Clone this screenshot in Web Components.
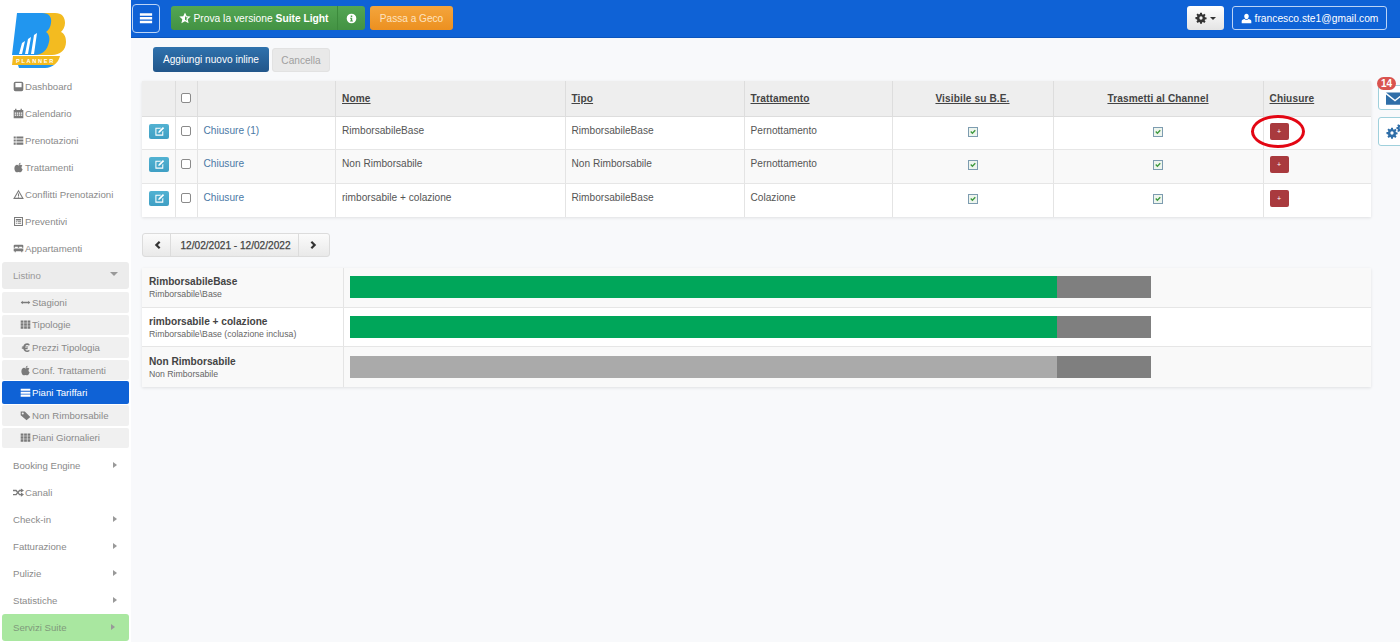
<!DOCTYPE html>
<html lang="it">
<head>
<meta charset="utf-8">
<title>BB Planner - Piani Tariffari</title>
<style>
  html, body { margin: 0; height: 100%; overflow: hidden; background: #f8f9fb; }
  body { font-family: "Liberation Sans", Arial, sans-serif; font-size: 10.5px; color: #555; }
</style>
</head>
<body>
<bb-app>
  <bb-sidebar slot="side">
    <bb-nav-item icon="hdd">Dashboard</bb-nav-item>
    <bb-nav-item icon="calendar">Calendario</bb-nav-item>
    <bb-nav-item icon="list">Prenotazioni</bb-nav-item>
    <bb-nav-item icon="apple">Trattamenti</bb-nav-item>
    <bb-nav-item icon="warning">Conflitti Prenotazioni</bb-nav-item>
    <bb-nav-item icon="listalt">Preventivi</bb-nav-item>
    <bb-nav-item icon="bed">Appartamenti</bb-nav-item>
    <bb-nav-item variant="open" caret="down">Listino</bb-nav-item>
    <bb-sub-nav>
      <bb-nav-item variant="sub" icon="resize">Stagioni</bb-nav-item>
      <bb-nav-item variant="sub" icon="th">Tipologie</bb-nav-item>
      <bb-nav-item variant="sub" icon="euro">Prezzi Tipologia</bb-nav-item>
      <bb-nav-item variant="sub" icon="apple">Conf. Trattamenti</bb-nav-item>
      <bb-nav-item variant="sub active" icon="menu">Piani Tariffari</bb-nav-item>
      <bb-nav-item variant="sub" icon="tag">Non Rimborsabile</bb-nav-item>
      <bb-nav-item variant="sub" icon="th">Piani Giornalieri</bb-nav-item>
    </bb-sub-nav>
    <bb-nav-item caret="right">Booking Engine</bb-nav-item>
    <bb-nav-item icon="random">Canali</bb-nav-item>
    <bb-nav-item caret="right">Check-in</bb-nav-item>
    <bb-nav-item caret="right">Fatturazione</bb-nav-item>
    <bb-nav-item caret="right">Pulizie</bb-nav-item>
    <bb-nav-item caret="right">Statistiche</bb-nav-item>
    <bb-nav-item variant="suite" caret="right">Servizi Suite</bb-nav-item>
  </bb-sidebar>
  <bb-topbar slot="top"></bb-topbar>
  <bb-toolbar></bb-toolbar>
  <bb-rates-table></bb-rates-table>
  <bb-date-nav>12/02/2021 - 12/02/2022</bb-date-nav>
  <bb-timeline></bb-timeline>
  <bb-side-tools slot="over"></bb-side-tools>
</bb-app>

<script>
const ICONS = {
  hdd: '<path fill-rule="evenodd" d="M3.500 1h9A2.500 2.500 0 0 1 15 3.500v9a2.500 2.500 0 0 1-2.500 2.500h-9A2.500 2.500 0 0 1 1 12.500v-9A2.500 2.500 0 0 1 3.500 1zM3.500 3v6h9V3z"/>',
  calendar: '<path d="M3 1h2v2h6V1h2v2h2v12H1V3h2zM2.500 6.500v1.700h2v-1.700zm3 0v1.700h2v-1.700zm3 0v1.700h2v-1.700zm3 0v1.700h2v-1.700zm-9 3v1.700h2v-1.700zm3 0v1.700h2v-1.700zm3 0v1.700h2v-1.700zm3 0v1.700h2v-1.700z" fill-rule="evenodd"/>',
  list: '<path d="M1 2h3v3H1zm4 0h10v3H5zM1 6.500h3v3H1zm4 0h10v3H5zM1 11h3v3H1zm4 0h10v3H5z"/>',
  apple: '<path d="M8.200 4.300C8.300 2.600 9.300 1.300 11 1c.1 1.700-1 3-2.800 3.300zM8 5c1-.6 2-.9 3-.9 1.100 0 2 .5 2.700 1.400-2 1.300-1.800 4 .3 5-.6 1.900-1.800 4.500-3.300 4.500-.9 0-1.500-.6-2.700-.6s-1.800.6-2.700.6C3.500 15 2 11.800 2 9.300 2 6 4 4.100 5.800 4.100 6.700 4.100 7.400 4.700 8 5z"/>',
  warning: '<path fill-rule="evenodd" d="M8 1l7.800 13.500H.2zM8 4L3 12.900h10zM7.200 6.500h1.600v3.700H7.200zm0 4.400h1.600v1.300H7.200z"/>',
  listalt: '<path fill-rule="evenodd" d="M1.500 1.500h13v13h-13zM3 3v10h10V3zm1.200 1.500h7.600v2H4.200zm0 3h1.500v1.300H4.200zm2.500 0h5.100v1.300H6.700zm-2.500 2.300h1.500v1.300H4.200zm2.500 0h5.100v1.300H6.700z"/>',
  bed: '<path d="M2.500 2.500h11A1.500 1.500 0 0 1 15 4v3h-2V5.500H9V7H7V5.500H3V7H1V4a1.500 1.500 0 0 1 1.500-1.500zM1 8h14v4h-1.500v1.500H12V12H4v1.500H2.500V12H1z"/>',
  resize: '<path d="M1 8l3-2.500V7h8V5.500L15 8l-3 2.500V9H4v1.500z"/>',
  th: '<path d="M1 2h4v3.400H1zm5 0h4v3.400H6zm5 0h4v3.400h-4zM1 6.300h4v3.400H1zm5 0h4v3.400H6zm5 0h4v3.400h-4zM1 10.600h4V14H1zm5 0h4V14H6zm5 0h4V14h-4z"/>',
  euro: '<path d="M14 3.200l-.6 2.200C12.600 4.800 11.600 4.400 10.600 4.400c-1.500 0-2.500.9-3 2.100H12l-.4 1.500H7.300v.9h4l-.4 1.500H7.700c.5 1.100 1.500 1.800 3 1.800 1.100 0 2.100-.4 3-1.100v2.500c-1 .6-2.100.9-3.300.9-2.900 0-5-1.700-5.700-4.600H2.500l.4-1.500h1.600V8H2.500l.4-1.500h1.800C5.500 3.400 7.700 1.800 10.500 1.800c1.300 0 2.500.5 3.500 1.400z"/>',
  menu: '<path d="M1 2.500h14v3H1zm0 4.300h14v3H1zm0 4.200h14v3H1z"/>',
  tag: '<path fill-rule="evenodd" d="M1 2h6l8 8-5.500 5L1 7.500zM4 3.500a1.500 1.500 0 1 0 0 3 1.500 1.500 0 0 0 0-3z"/>',
  random: '<path d="M11.500 2L16 5l-4.500 3V6H10L8.300 8 10 10h1.500V8l4.500 3-4.500 3v-2H9L7 9.500 5 12H0v-2h4l1.700-2L4 6H0V4h5l2 2.500L9 4h2.500z"/>',
  star: '<path fill-rule="evenodd" d="M8 .5l2.300 5 5.300.5-4 3.600 1.200 5.300L8 12.200l-4.800 2.700 1.200-5.300-4-3.600 5.300-.5zM8 4.500v5.900l2.400 1.400-.6-2.800 2.100-1.800-2.800-.3z"/>',
  info: '<path fill-rule="evenodd" d="M8 1a7 7 0 1 1 0 14A7 7 0 0 1 8 1zM6.900 3.500v2.200h2.200V3.500zM6 7v1.300h1V11H6v1.300h4V11H9V7z"/>',
  cog: '<path fill-rule="evenodd" d="M6.800 1h2.400l.3 2.100 1.200.5 1.700-1.300 1.700 1.700-1.300 1.700.5 1.200 2.100.3v2.400l-2.100.3-.5 1.200 1.300 1.700-1.700 1.700-1.700-1.300-1.200.5-.3 2.100H6.800l-.3-2.100-1.200-.5-1.700 1.300-1.700-1.700 1.300-1.700-.5-1.200L.6 9.200V6.800l2.100-.3.5-1.200-1.300-1.700 1.700-1.700 1.700 1.300 1.200-.5zM8 5.800a2.200 2.200 0 1 0 0 4.400 2.200 2.200 0 0 0 0-4.400z"/>',
  user: '<path d="M8 1c2 0 3.300 1.500 3.300 3.700S10 9 8 9 4.700 6.900 4.700 4.700 6 1 8 1zM5.300 8.600C6 9.500 7 10 8 10s2-.5 2.700-1.400c2.200.6 4.300 1.400 4.300 2.900V15H1v-3.500c0-1.500 2.100-2.300 4.300-2.900z"/>',
  edit: '<path fill-rule="evenodd" d="M2 2.500h8.500L9 4H3.500v8.500H12V8.500L13.500 7v7H2zM13 1.500l1.800 1.800-6.300 6.200-2.300.6.600-2.400z"/>',
  envelope: '<path d="M0 3h16L8 9.500zM0 4.800l8 6.400 8-6.400V14H0z"/>',
  check: '<path d="M2.500 8l2-2 2.300 2.300 4.700-5 2 2L6.800 12.500z"/>',
  left: '<path d="M11 1.500L13.500 4l-4 4 4 4-2.500 2.500L4.500 8z"/>',
  right: '<path d="M5 1.500L2.500 4l4 4-4 4L5 14.500 11.500 8z"/>'
};

class BbIcon extends HTMLElement {
  constructor() {
    super();
    this.attachShadow({ mode: 'open' });
  }

  connectedCallback() {
    const size = this.getAttribute('size') || 11;
    this.shadowRoot.innerHTML = `
      <style>
        :host { display: inline-flex; flex: none; width: ${size}px; height: ${size}px; }
        svg { width: 100%; height: 100%; fill: currentColor; display: block; }
      </style>
      <svg viewBox="0 0 16 16" aria-hidden="true">${ICONS[this.getAttribute('name')] || ''}</svg>
    `;
  }
}
customElements.define('bb-icon', BbIcon);

class BbApp extends HTMLElement {
  constructor() {
    super();
    this.attachShadow({ mode: 'open' });
    this.shadowRoot.innerHTML = `
      <style>
        :host { display: flex; height: 642px; width: 1400px; position: relative; overflow: hidden; }
        .main { flex: 1; min-width: 0; display: flex; flex-direction: column; }
        .content { padding: 9px 29px 0 11px; display: flex; flex-direction: column; }
      </style>
      <slot name="side"></slot>
      <div class="main">
        <slot name="top"></slot>
        <div class="content"><slot></slot></div>
      </div>
      <slot name="over"></slot>
    `;
  }
}
customElements.define('bb-app', BbApp);

class BbSidebar extends HTMLElement {
  constructor() {
    super();
    this.attachShadow({ mode: 'open' });
    this.shadowRoot.innerHTML = `
      <style>
        :host { display: block; width: 131px; flex: none; background: #fff; }
        .logo { height: 73px; padding: 13px 0 0 12px; box-sizing: border-box; }
        svg { display: block; width: 55px; height: 56px; }
        text { font: bold 5.600px "Liberation Sans", Arial, sans-serif; letter-spacing: 1.700px; fill: #fff; }
      </style>
      <div class="logo">
        <svg viewBox="0 0 55 56">
          <path fill="#f3bb20" d="M28 0h15c7 0 10 4 10 10 0 4-2 7-4 9 4 2 5 6 5 10 0 8-6 13-14 13H24z"/>
          <path fill="#2196ef" d="M5 0h25c7 0 10 4 9 10-.5 4-2 7-5 9 3 2 4 6 3 10-1.500 8-7 13-14 13H0z"/>
          <path fill="#fff" d="M7 41l3-11 3-2-3 13zM13 41l3-15 3-2-3 17zM19 41l3-19 3-2-3 21z"/>
          <path fill="#f3bb20" d="M1 43h47c-1 4-3 7-6 9H0z"/>
          <path fill="#2196ef" d="M6 52h36c-2 1-5 3-9 3H7z"/>
          <text x="4" y="50">PLANNER</text>
        </svg>
      </div>
      <slot></slot>
    `;
  }
}
customElements.define('bb-sidebar', BbSidebar);

class BbSubNav extends HTMLElement {
  constructor() {
    super();
    this.attachShadow({ mode: 'open' });
    this.shadowRoot.innerHTML = `
      <style>
        :host { display: grid; grid-auto-rows: 20.600px; row-gap: 2px; padding: 3px 0 4px; }
      </style>
      <slot></slot>
    `;
  }
}
customElements.define('bb-sub-nav', BbSubNav);

class BbNavItem extends HTMLElement {
  constructor() {
    super();
    this.attachShadow({ mode: 'open' });
  }

  connectedCallback() {
    const icon = this.getAttribute('icon');
    const caret = this.getAttribute('caret');
    const tri = caret === 'down'
      ? 'border-left:4.500px solid transparent;border-right:4.500px solid transparent;border-top:4px solid #999;margin-top:-4px;'
      : 'border-top:3.500px solid transparent;border-bottom:3.500px solid transparent;border-left:4px solid #999;margin-top:-2px;';
    this.shadowRoot.innerHTML = `
      <style>
        :host { display: flex; align-items: center; gap: 1px; height: 27px; box-sizing: border-box;
          padding: 0 13px; color: #8a8a8a; font-size: 9.650px; white-space: nowrap; }
        :host([variant~="open"]) { background: #ececec; margin: 0 2px; padding: 0 11px; border-radius: 3px; color: #999; }
        :host([variant~="sub"]) { height: auto; background: #f0f0f0; margin: 0 2px; padding: 0 0 0 18px; border-radius: 2px; }
        :host([variant~="active"]) { background: #0f62d6; color: #fff; margin-top: -1px; margin-bottom: -1px; }
        :host([variant~="suite"]) { background: #a9e7a0; margin: 0 2px; padding: 0 13px 0 11px; border-radius: 3px; color: #7f9a7b; }
        .caret { margin-left: auto; width: 0; height: 0; ${tri} }
        :host([caret="right"]) .caret { margin-right: 1px; }
        bb-icon { color: #7a7a7a; }
        :host([variant~="active"]) bb-icon { color: #fff; }
      </style>
      ${icon ? `<bb-icon name="${icon}" size="11"></bb-icon>` : ''}
      <span><slot></slot></span>
      ${caret ? '<i class="caret"></i>' : ''}
    `;
  }
}
customElements.define('bb-nav-item', BbNavItem);

class BbButton extends HTMLElement {
  constructor() {
    super();
    this.attachShadow({ mode: 'open' });
    this.shadowRoot.innerHTML = `
      <style>
        :host { display: inline-flex; align-items: center; justify-content: center; gap: 3px; box-sizing: border-box;
          height: 24px; padding: 0 9px; border-radius: 3px; font-size: 10.100px; white-space: nowrap; }
        :host([kind="success"]) { background: linear-gradient(#53a653, #439243); color: #fff; }
        :host([kind="warning"]) { background: linear-gradient(#f4a53c, #ec9020); color: #fde3c0; }
        :host([kind="primary"]) { background: linear-gradient(#2f72ad, #22568a); color: #fff; height: 25px; }
        :host([kind="disabled"]) { background: #e9e9e9; color: #a0a0a0; border: 1px solid #e2e2e2; }
        :host([kind="light"]) { background: linear-gradient(#fff, #e4e4e4); color: #333; }
        :host([kind="outline"]) { background: #0f62d6; border: 1px solid #bcd4f6; color: #fff; }
      </style>
      <slot></slot>
    `;
  }
}
customElements.define('bb-button', BbButton);

class BbTopbar extends HTMLElement {
  constructor() {
    super();
    this.attachShadow({ mode: 'open' });
    this.shadowRoot.innerHTML = `
      <style>
        :host { display: flex; align-items: center; flex: none; height: 38px; box-sizing: border-box;
          background: #0f62d6; border-bottom: 1px solid #0b55bd; padding: 0 13px 1px 1px; }
        .burger { width: 28px; height: 29px; box-sizing: border-box; border: 1px solid #bcd4f6; border-radius: 4px;
          color: #fff; display: flex; align-items: center; justify-content: center; margin-right: 11px; }
        .split { display: flex; margin-right: 5px; }
        #suite { width: 166px; padding: 0 1px 0 0; border-radius: 3px 0 0 3px; font-size: 10.250px; }
        #info { width: 28px; padding: 0; border-radius: 0 3px 3px 0; border-left: 1px solid #3c8a3c; }
        #geco { width: 83px; padding: 0; }
        .spacer { flex: 1; }
        #gear { width: 37px; padding: 0; margin-right: 8px; }
        #user { width: 155px; padding: 0; font-size: 10.250px; }
        .mini { width: 0; height: 0; border-left: 3px solid transparent; border-right: 3px solid transparent; border-top: 3.500px solid #333; }
      </style>
      <div class="burger"><bb-icon name="menu" size="14"></bb-icon></div>
      <div class="split">
        <bb-button id="suite" kind="success"><bb-icon name="star" size="12"></bb-icon><span>Prova la versione <b>Suite Light</b></span></bb-button>
        <bb-button id="info" kind="success"><bb-icon name="info" size="11"></bb-icon></bb-button>
      </div>
      <bb-button id="geco" kind="warning">Passa a Geco</bb-button>
      <div class="spacer"></div>
      <bb-button id="gear" kind="light"><bb-icon name="cog" size="12"></bb-icon><i class="mini"></i></bb-button>
      <bb-button id="user" kind="outline"><bb-icon name="user" size="11"></bb-icon>francesco.ste1@gmail.com</bb-button>
    `;
  }
}
customElements.define('bb-topbar', BbTopbar);

class BbToolbar extends HTMLElement {
  constructor() {
    super();
    this.attachShadow({ mode: 'open' });
    this.shadowRoot.innerHTML = `
      <style>
        :host { display: flex; align-items: flex-end; gap: 3px; padding-left: 11px; margin-bottom: 9px; }
        #add { width: 116px; padding: 0; }
        #del { width: 58px; padding: 0; }
      </style>
      <bb-button id="add" kind="primary">Aggiungi nuovo inline</bb-button>
      <bb-button id="del" kind="disabled">Cancella</bb-button>
    `;
  }
}
customElements.define('bb-toolbar', BbToolbar);

class BbRatesTable extends HTMLElement {
  constructor() {
    super();
    this.attachShadow({ mode: 'open' });
  }

  connectedCallback() {
    const rows = [
      { link: 'Chiusure (1)', nome: 'RimborsabileBase', tipo: 'RimborsabileBase', tratt: 'Pernottamento' },
      { link: 'Chiusure', nome: 'Non Rimborsabile', tipo: 'Non Rimborsabile', tratt: 'Pernottamento' },
      { link: 'Chiusure', nome: 'rimborsabile + colazione', tipo: 'RimborsabileBase', tratt: 'Colazione' }
    ];
    const tick = '<span class="tick"><bb-icon name="check" size="8"></bb-icon></span>';
    this.shadowRoot.innerHTML = `
      <style>
        :host { display: block; margin-bottom: 16px; box-shadow: 0 1px 3px rgba(0,0,0,.1); background: #fff; }
        table { border-collapse: collapse; table-layout: fixed; width: 1229px; font-size: 10.150px; color: #555; }
        th { height: 35px; padding: 0 6px; background: #eee; color: #444; font-size: 10.100px; letter-spacing: .12px; text-align: left;
          text-decoration: underline; border-left: 1px solid #ddd; border-bottom: 1px solid #ddd; box-sizing: border-box; }
        td { padding: 7px 6px 0; line-height: 14px; vertical-align: top; border-left: 1px solid #e4e4e4; border-bottom: 1px solid #e6e6e6; box-sizing: border-box; height: 33.700px; }
        tr:last-child td { border-bottom: 0; }
        th:first-child, td:first-child { border-left: 0; }
        td:nth-child(4), th:nth-child(4) { padding-left: 6.500px; }
        td:first-child { padding-left: 7px; }
        tbody tr:nth-child(even) td { background: #f9f9f9; }
        .c { text-align: center; }
        a { color: #4a78a5; text-decoration: none; }
        .box { display: block; box-sizing: border-box; width: 10px; height: 10px; border: 1px solid #8a8a8a; border-radius: 2px; background: #fff; }
        td .box { margin-top: 2px; }
        .tick { display: inline-flex; box-sizing: border-box; margin-top: 3px; width: 10px; height: 10px; border: 1px solid #7d9cb0; background: #eef5ee; color: #3f9a3f; }
        .edit { display: flex; align-items: center; justify-content: center; width: 20px; height: 15px; margin-top: 0; border-radius: 2px;
          background: linear-gradient(#52b2d2, #3f9fc4); color: #fff; }
        .plus { display: flex; align-items: center; justify-content: center; width: 19px; height: 17px; border-radius: 2px; margin-top: -1px;
          background: #a93a3e; color: #fff; font-size: 7px; line-height: 1; }
        .cb { padding: 0 0 0 5px; }
        td.cb { padding-top: 7px; }
      </style>
      <table>
        <colgroup>
          <col style="width:33px"><col style="width:22px"><col style="width:138px"><col style="width:230px">
          <col style="width:179px"><col style="width:148px"><col style="width:161px"><col style="width:210px"><col style="width:108px">
        </colgroup>
        <thead>
          <tr>
            <th></th>
            <th class="cb"><span class="box"></span></th>
            <th></th>
            <th>Nome</th>
            <th>Tipo</th>
            <th>Trattamento</th>
            <th class="c">Visibile su B.E.</th>
            <th class="c">Trasmetti al Channel</th>
            <th>Chiusure</th>
          </tr>
        </thead>
        <tbody>
          ${rows.map(r => `
            <tr>
              <td><span class="edit"><bb-icon name="edit" size="11"></bb-icon></span></td>
              <td class="cb"><span class="box"></span></td>
              <td><a href="#">${r.link}</a></td>
              <td>${r.nome}</td>
              <td>${r.tipo}</td>
              <td>${r.tratt}</td>
              <td class="c">${tick}</td>
              <td class="c">${tick}</td>
              <td><span class="plus">+</span></td>
            </tr>
          `).join('')}
        </tbody>
      </table>
    `;
  }
}
customElements.define('bb-rates-table', BbRatesTable);

class BbDateNav extends HTMLElement {
  constructor() {
    super();
    this.attachShadow({ mode: 'open' });
    this.shadowRoot.innerHTML = `
      <style>
        :host { display: inline-flex; align-self: flex-start; height: 24px; margin-bottom: 11px; border: 1px solid #dcdcdc; border-radius: 3px;
          box-sizing: border-box; width: 188px; background: linear-gradient(#fbfbfb, #e9e9e9); color: #333; font-size: 10.100px; }
        div { display: flex; align-items: center; justify-content: center; }
        .arrow { width: 27px; flex: none; }
        .arrow + .label + .arrow { width: 30px; }
        .label { flex: 1; padding-left: 2px; color: #444; white-space: nowrap; border-left: 1px solid #dcdcdc; border-right: 1px solid #dcdcdc; -webkit-text-stroke: .25px #444; }
      </style>
      <div class="arrow"><bb-icon name="left" size="10"></bb-icon></div>
      <div class="label"><slot></slot></div>
      <div class="arrow"><bb-icon name="right" size="10"></bb-icon></div>
    `;
  }
}
customElements.define('bb-date-nav', BbDateNav);

class BbTimeline extends HTMLElement {
  constructor() {
    super();
    this.attachShadow({ mode: 'open' });
  }

  connectedCallback() {
    const rows = [
      { title: 'RimborsabileBase', sub: 'Rimborsabile\\Base', color: '#00a65a' },
      { title: 'rimborsabile + colazione', sub: 'Rimborsabile\\Base (colazione inclusa)', color: '#00a65a' },
      { title: 'Non Rimborsabile', sub: 'Non Rimborsabile', color: '#aaaaaa' }
    ];
    this.shadowRoot.innerHTML = `
      <style>
        :host { display: block; width: 1229px; box-shadow: 0 1px 3px rgba(0,0,0,.1); }
        .wrap { display: flex; flex-direction: column; }
        .row { display: grid; grid-template-columns: 202px 1fr; height: 39.500px; background: #f9f9f9; border-bottom: 1px solid #e6e6e6; box-sizing: border-box; }
        .row:nth-child(even) { background: #fff; }
        .row:last-child { border-bottom: 0; }
        .label { padding: 1px 0 0 7px; border-right: 1px solid #e4e4e4; display: flex; flex-direction: column; justify-content: center; }
        .label b { font-size: 10.150px; color: #444; line-height: 13px; }
        .label span { font-size: 8.700px; color: #666; line-height: 12px; }
        .track { display: flex; align-items: center; padding-left: 6px; }
        .bar { height: 22px; width: 707px; }
        .rest { height: 22px; width: 94px; background: #7f7f7f; }
      </style>
      <div class="wrap">
      ${rows.map(r => `
        <div class="row">
          <div class="label"><b>${r.title}</b><span>${r.sub}</span></div>
          <div class="track"><div class="bar" style="background:${r.color}"></div><div class="rest"></div></div>
        </div>
      `).join('')}
      </div>
    `;
  }
}
customElements.define('bb-timeline', BbTimeline);

class BbSideTools extends HTMLElement {
  constructor() {
    super();
    this.attachShadow({ mode: 'open' });
    this.shadowRoot.innerHTML = `
      <style>
        .tool { position: absolute; left: 1378px; width: 30px; box-sizing: border-box; background: #fff;
          border: 1px solid #9fd0dc; border-radius: 3px; color: #2f6ea8; }
        #mail { top: 85px; height: 25px; padding: 3px 0 0 7px; }
        #gears { top: 117px; height: 29px; padding: 8px 0 0 7px; display: flex; align-items: flex-start; }
        #gears .big { margin-top: 1px; }
        #gears .small { margin: -3px 0 0 -2px; }
        .badge { position: absolute; left: 1377px; top: 77px; width: 19px; height: 13px; border-radius: 7px; background: #d9534f;
          color: #fff; font: bold 10px/13px "Liberation Sans", Arial, sans-serif; text-align: center; }
        .ring { position: absolute; left: 1251px; top: 115px; width: 54px; height: 33px; box-sizing: border-box;
          border: 3px solid #e30613; border-radius: 50%; }
      </style>
      <div class="tool" id="mail"><bb-icon name="envelope" size="18"></bb-icon></div>
      <div class="tool" id="gears"><bb-icon class="big" name="cog" size="12"></bb-icon><bb-icon class="small" name="cog" size="10"></bb-icon></div>
      <div class="badge">14</div>
      <div class="ring"></div>
    `;
  }
}
customElements.define('bb-side-tools', BbSideTools);
</script>
</body>
</html>
